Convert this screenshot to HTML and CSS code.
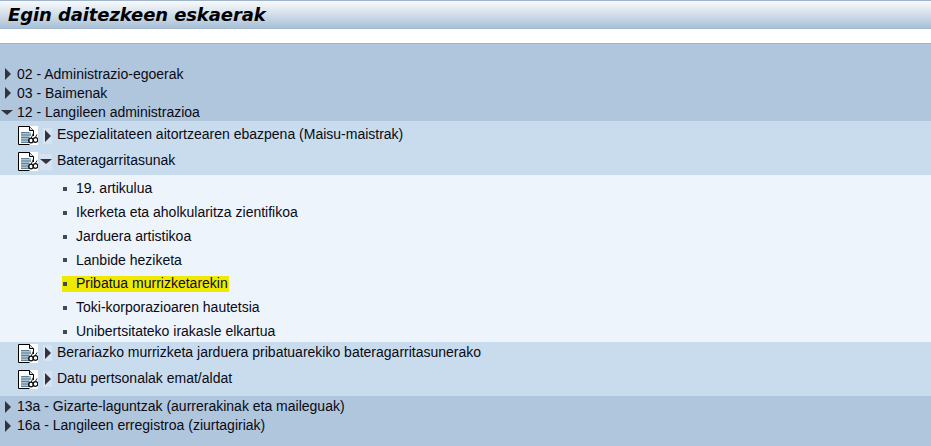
FILE: index.html
```html
<!DOCTYPE html>
<html lang="en">
<head>
    <meta charset="UTF-8">
    <title>Egin daitezkeen eskaerak</title>
    <link rel="stylesheet" href="styles.css">
</head>
<body>
    <svg class="icon-defs" width="0" height="0">
        <symbol id="doc" viewBox="0 0 20 19">
            <rect width="20" height="19" fill="#fff"/>
            <path d="M.5.500H11.500L15.500 4.500V18.500H.5Z" fill="#fff" stroke="#000"/>
            <path d="M11.500.500V4.500H15.500" fill="#cfd8e0" stroke="#000"/>
            <rect x="3" y="6" width="10" height="10" fill="#a9c2d2"/>
            <path d="M3 6.500H11M3 9H13M3 11.500H13M3 14H13M3 16.500H11" stroke="#5f7f96"/>
            <path d="M11.500 19V10H20V19Z" fill="#fff"/>
            <path d="M13 12.500L15.500 7M17 12L19 8.500" stroke="#222" fill="none"/>
            <circle cx="13" cy="14.500" r="2.300" fill="none" stroke="#111" stroke-width="1.300"/>
            <circle cx="17.500" cy="14" r="2.300" fill="none" stroke="#111" stroke-width="1.300"/>
        </symbol>
    </svg>

    <header class="title-bar">
        <h1>Egin daitezkeen eskaerak</h1>
    </header>
    <div class="white-band"></div>

    <main class="tree">
        <div class="row-top"><span class="arrow-right"></span>02 - Administrazio-egoerak</div>
        <div class="row-top"><span class="arrow-right"></span>03 - Baimenak</div>
        <div class="row-top"><span class="arrow-down"></span>12 - Langileen administrazioa</div>

        <section class="level-two">
            <div class="row-mid">
                <svg class="doc-icon"><use href="#doc"/></svg>
                <span class="arrow-box"><span class="arrow-right"></span></span>
                Espezialitateen aitortzearen ebazpena (Maisu-maistrak)
            </div>
            <div class="row-mid">
                <svg class="doc-icon"><use href="#doc"/></svg>
                <span class="arrow-box arrow-box-open"><span class="arrow-down"></span></span>
                Bateragarritasunak
            </div>
        </section>

        <section class="level-three">
            <div class="row-leaf"><span class="leaf-text"><span class="bullet"></span>19. artikulua</span></div>
            <div class="row-leaf"><span class="leaf-text"><span class="bullet"></span>Ikerketa eta aholkularitza zientifikoa</span></div>
            <div class="row-leaf"><span class="leaf-text"><span class="bullet"></span>Jarduera artistikoa</span></div>
            <div class="row-leaf"><span class="leaf-text"><span class="bullet"></span>Lanbide heziketa</span></div>
            <div class="row-leaf"><span class="leaf-text selected"><span class="bullet"></span>Pribatua murrizketarekin</span></div>
            <div class="row-leaf"><span class="leaf-text"><span class="bullet"></span>Toki-korporazioaren hautetsia</span></div>
            <div class="row-leaf"><span class="leaf-text"><span class="bullet"></span>Unibertsitateko irakasle elkartua</span></div>
        </section>

        <section class="level-two level-two-tail">
            <div class="row-mid">
                <svg class="doc-icon"><use href="#doc"/></svg>
                <span class="arrow-box"><span class="arrow-right"></span></span>
                Berariazko murrizketa jarduera pribatuarekiko bateragarritasunerako
            </div>
            <div class="row-mid">
                <svg class="doc-icon"><use href="#doc"/></svg>
                <span class="arrow-box"><span class="arrow-right"></span></span>
                Datu pertsonalak emat/aldat
            </div>
        </section>

        <div class="row-top"><span class="arrow-right"></span>13a - Gizarte-laguntzak (aurrerakinak eta maileguak)</div>
        <div class="row-top"><span class="arrow-right"></span>16a - Langileen erregistroa (ziurtagiriak)</div>
    </main>
</body>
</html>
```

FILE: styles.css
```css
/* Page */
html, body {
    height: 100%;
}

body {
    margin: 0;
    display: flex;
    flex-direction: column;
    overflow: hidden;
    font-family: "Liberation Sans", Arial, sans-serif;
    font-size: 14px;
    color: #0a0a14;
    background: #b0c6dc;
}

.icon-defs {
    display: block;
    height: 0;
}

/* Title */
.title-bar {
    height: 27px;
    padding-left: 8px;
    border-top: 1px solid #9fb4c9;
    border-bottom: 1px solid #a4bad0;
    background: linear-gradient(#f7fafc, #d6e1ec 45%, #a9c0d6);
}

.title-bar h1 {
    margin: 0;
    font-family: "DejaVu Sans", Verdana, sans-serif;
    font-size: 18px;
    font-style: italic;
    font-weight: bold;
    letter-spacing: -0.1px;
    line-height: 27px;
    color: #000;
}

.white-band {
    height: 14px;
    background: #fff;
    border-bottom: 1px solid #9db3c9;
}

/* Tree */
.tree {
    padding-top: 20px;
}

.row-top {
    display: flex;
    align-items: center;
    height: 19px;
    padding-left: 17px;
    position: relative;
}

.row-top .arrow-right {
    position: absolute;
    left: 5px;
    top: 4px;
}

.row-top .arrow-down {
    position: absolute;
    left: 1px;
    top: 8px;
}

.level-two-tail + .row-top {
    margin-top: 1px;
}

.arrow-right {
    width: 0;
    height: 0;
    border-style: solid;
    border-width: 6px 0 6px 6px;
    border-color: transparent transparent transparent #33333d;
}

.arrow-down {
    width: 0;
    height: 0;
    border-style: solid;
    border-width: 5px 6px 0 6px;
    border-color: #33333d transparent transparent transparent;
}

/* Second level */
.level-two {
    padding-bottom: 2px;
    background: #c9dcee;
}

.row-mid {
    display: flex;
    align-items: center;
    height: 26px;
    padding-left: 18px;
}

.level-two-tail .row-mid {
    height: 20px;
    margin-bottom: 6px;
}

.doc-icon {
    width: 20px;
    height: 19px;
    margin-top: 3px;
}

.arrow-box {
    display: flex;
    align-items: center;
    justify-content: center;
    width: 9px;
    height: 16px;
    margin: 3px 5px 0 5px;
    background: #d7e3f0;
}

.arrow-box-open {
    width: 12px;
    margin-left: 2px;
}

/* Third level */
.level-three {
    padding-bottom: 0.400px;
    background: #edf4fc;
}

.row-leaf {
    height: 23.800px;
    padding-left: 62px;
    line-height: 23.800px;
}

.leaf-text {
    display: inline-flex;
    align-items: center;
    height: 16px;
    padding-right: 1px;
}

.bullet {
    width: 4px;
    height: 4px;
    margin: 0 9px 0 1px;
    background: #3f4a58;
}

.selected {
    background: #f0ea00;
}
```
